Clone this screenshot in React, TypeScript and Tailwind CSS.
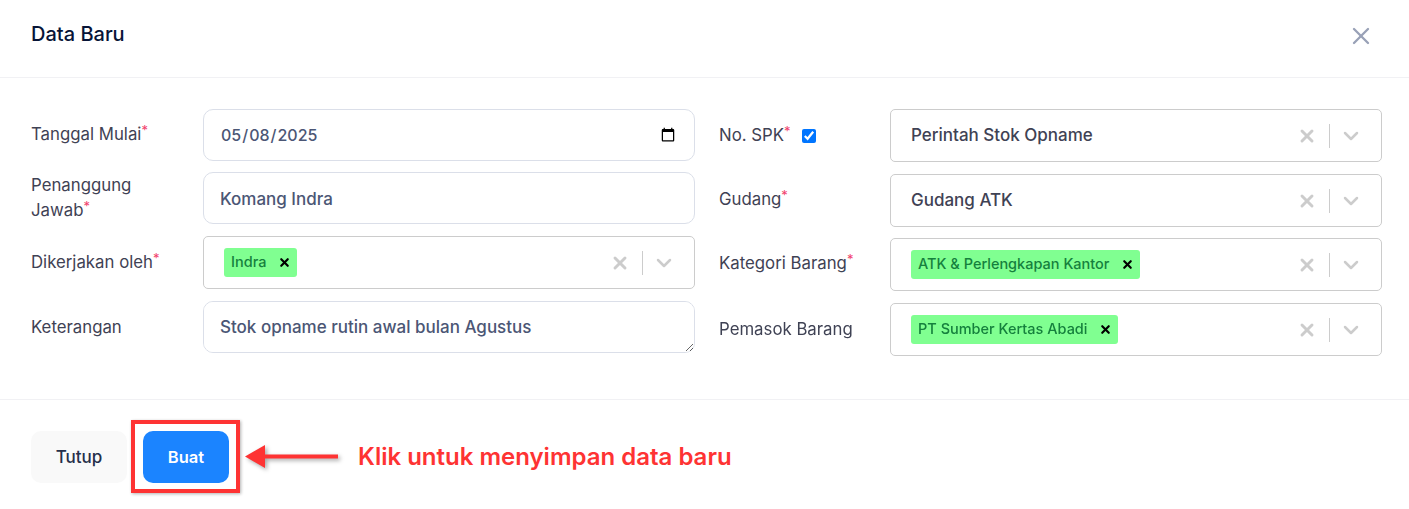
import { ChevronDown, X } from "lucide-react"

function Req() {
  return <sup className="text-[#f1416c] text-[13px] leading-none -top-[5px]">*</sup>
}

function Tag({ label }: { label: string }) {
  return (
    <span className="flex h-[29px] items-center gap-[12px] rounded-[3px] bg-[#80ff91] pl-[7px] pr-[6px] text-[14.5px] font-medium text-[#15803d]">
      <span className="pb-[2px]">{label}</span>
      <X className="h-[13px] w-[13px] text-black" strokeWidth={4} />
    </span>
  )
}

function SelectBox({ children }: { children: React.ReactNode }) {
  return (
    <div className="flex h-[53px] w-[492px] items-center rounded-[5px] border border-[#cccccc] bg-white pl-[20px]">
      <div className="flex-1 text-[17px] font-medium text-[#3f4254]">{children}</div>
      <X className="h-[20px] w-[20px] text-[#cccccc]" strokeWidth={3.5} />
      <div className="ml-[12px] h-[24px] w-px bg-[#cccccc]" />
      <ChevronDown className="ml-[9px] mr-[18px] h-[24px] w-[24px] text-[#cccccc]" strokeWidth={2.5} />
    </div>
  )
}

const inputCls =
  "h-[52px] w-[492px] rounded-[10px] border border-[#dbdfe9] bg-white px-[16px] font-medium text-[#4b5675] outline-none"

export default function App() {
  return (
    <div className="relative h-[509px] w-[1409px] bg-white font-['Inter',sans-serif] text-[16.8px] text-[#3f4254]">
      <div className="flex h-[78px] items-start justify-between border-b border-[#f1f1f4] pl-[31px] pr-[34px]">
        <h1 className="mt-[21px] text-[20px] font-medium leading-[26px] text-[#071437]">Data Baru</h1>
        <X className="mt-[22px] h-[28px] w-[28px] text-[#99a1b7]" strokeWidth={2} />
      </div>

      <div className="flex h-[322px] gap-[24px] border-b border-[#f1f1f4] pl-[31px] pt-[31px]">
        <div className="flex w-[664px] flex-col">
          <div className="flex items-center">
            <label className="w-[172px]">Tanggal Mulai<Req /></label>
            <input type="date" defaultValue="2025-05-08" className={inputCls + " text-[16px]"} />
          </div>
          <div className="mt-[11px] flex items-center">
            <label className="w-[172px] pr-[40px] leading-[25px]">Penanggung Jawab<Req /></label>
            <input type="text" defaultValue="Komang Indra" className={inputCls + " pt-[2px] text-[17px]"} />
          </div>
          <div className="mt-[12px] flex items-center">
            <label className="w-[172px]">Dikerjakan oleh<Req /></label>
            <SelectBox><div className="flex"><Tag label="Indra" /></div></SelectBox>
          </div>
          <div className="mt-[12px] flex items-start">
            <label className="mt-[14px] w-[172px]">Keterangan</label>
            <textarea defaultValue="Stok opname rutin awal bulan Agustus" className={inputCls + " block py-[13px] text-[17px]"} />
          </div>
        </div>

        <div className="flex w-[663px] flex-col">
          <div className="flex items-center">
            <label className="flex w-[171px] items-center">
              <span>No. SPK<Req /></span>
              <input type="checkbox" defaultChecked className="ml-[11px] h-[14px] w-[14px] accent-[#0075ff]" />
            </label>
            <SelectBox>Perintah Stok Opname</SelectBox>
          </div>
          <div className="mt-[12px] flex items-center">
            <label className="w-[171px] pb-[2px]">Gudang<Req /></label>
            <SelectBox>Gudang ATK</SelectBox>
          </div>
          <div className="mt-[11px] flex items-center">
            <label className="w-[171px] pb-[2px]">Kategori Barang<Req /></label>
            <SelectBox><div className="flex"><Tag label="ATK & Perlengkapan Kantor" /></div></SelectBox>
          </div>
          <div className="mt-[12px] flex items-center">
            <label className="w-[171px]">Pemasok Barang</label>
            <SelectBox><div className="flex"><Tag label="PT Sumber Kertas Abadi" /></div></SelectBox>
          </div>
        </div>
      </div>

      <div className="flex gap-[16px] pl-[31px] pt-[31px]">
        <button className="h-[52px] w-[96px] rounded-[10px] bg-[#f9f9f9] pt-[2px] text-[17px] font-medium text-[#252f4a]">Tutup</button>
        <button className="h-[52px] w-[86px] rounded-[10px] bg-[#1b84ff] text-[16.5px] font-semibold text-white">Buat</button>
      </div>

      {/* annotation over the screenshot */}
      <div className="absolute left-[131px] top-[420px] h-[73px] w-[109px] border-[4px] border-[#fe3333] shadow-[1px_1px_3px_rgba(0,0,0,0.3)]" />
      <svg className="absolute left-[244px] top-[444px] drop-shadow-[2px_2px_2px_rgba(0,0,0,0.35)]" width="100" height="28" viewBox="0 0 100 28">
        <path d="M1 12.5 L21 1 V10.5 H94 V14.5 H21 V24 Z" fill="#fe3333" />
      </svg>
      <div className="absolute left-[358px] top-[442px] text-[24px] font-semibold leading-[30px] text-[#fe3333]">
        Klik untuk menyimpan data baru
      </div>
    </div>
  )
}
